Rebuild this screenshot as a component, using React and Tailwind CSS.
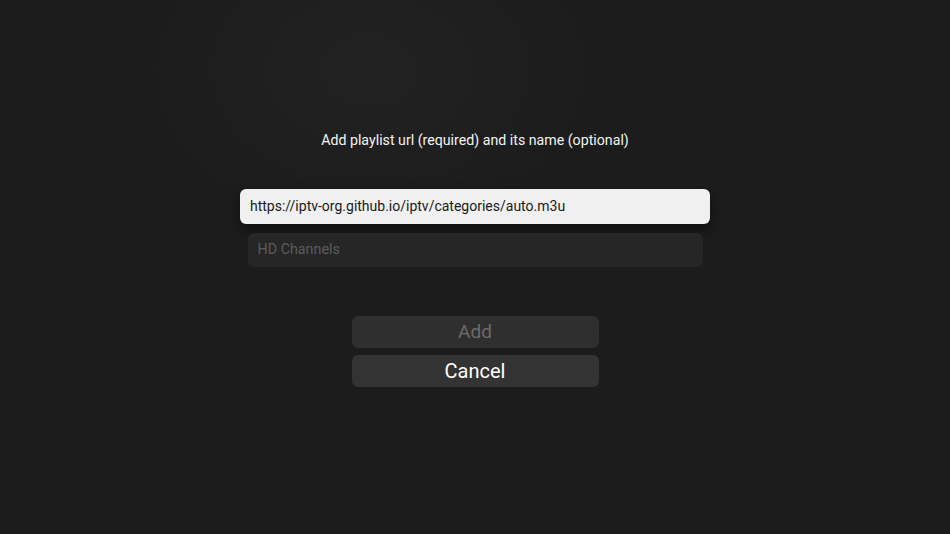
export default function App() {
  return (
    <div
      className="flex h-[534px] w-full flex-col items-center bg-[#1c1c1c] bg-[radial-gradient(ellipse_220px_160px_at_370px_70px,#222222,transparent)] pt-[130px] text-white"
      style={{ fontFamily: 'Roboto, "Noto Sans", sans-serif' }}
    >
      <h1 className="text-[14.2px] leading-5 font-normal text-[#f2f2f2]">
        Add playlist url (required) and its name (optional)
      </h1>

      <div className="mt-[39px] flex h-[35px] w-[470px] items-center rounded-[6px] bg-[#f0f0f0] px-[10px] shadow-[0_6px_14px_rgba(0,0,0,0.45)]">
        <span className="text-[14px] text-[#1a1a1a]">https://iptv-org.github.io/iptv/categories/auto.m3u</span>
      </div>

      <div className="mt-[9px] flex h-[34px] w-[455px] items-center rounded-[6px] bg-[#262626] px-[10px]">
        <span className="text-[14.3px] text-[#5c5c5c]">HD Channels</span>
      </div>

      <div className="mt-[49px] flex flex-col gap-[7px]">
        <button className="flex h-[32px] w-[247px] items-center justify-center rounded-[6px] bg-[#2f2f2f] text-[19px] text-[#6b6b6b]">
          Add
        </button>
        <button className="flex h-[32px] w-[247px] items-center justify-center rounded-[6px] bg-[#333333] text-[20px] font-normal text-white">
          Cancel
        </button>
      </div>
    </div>
  );
}
